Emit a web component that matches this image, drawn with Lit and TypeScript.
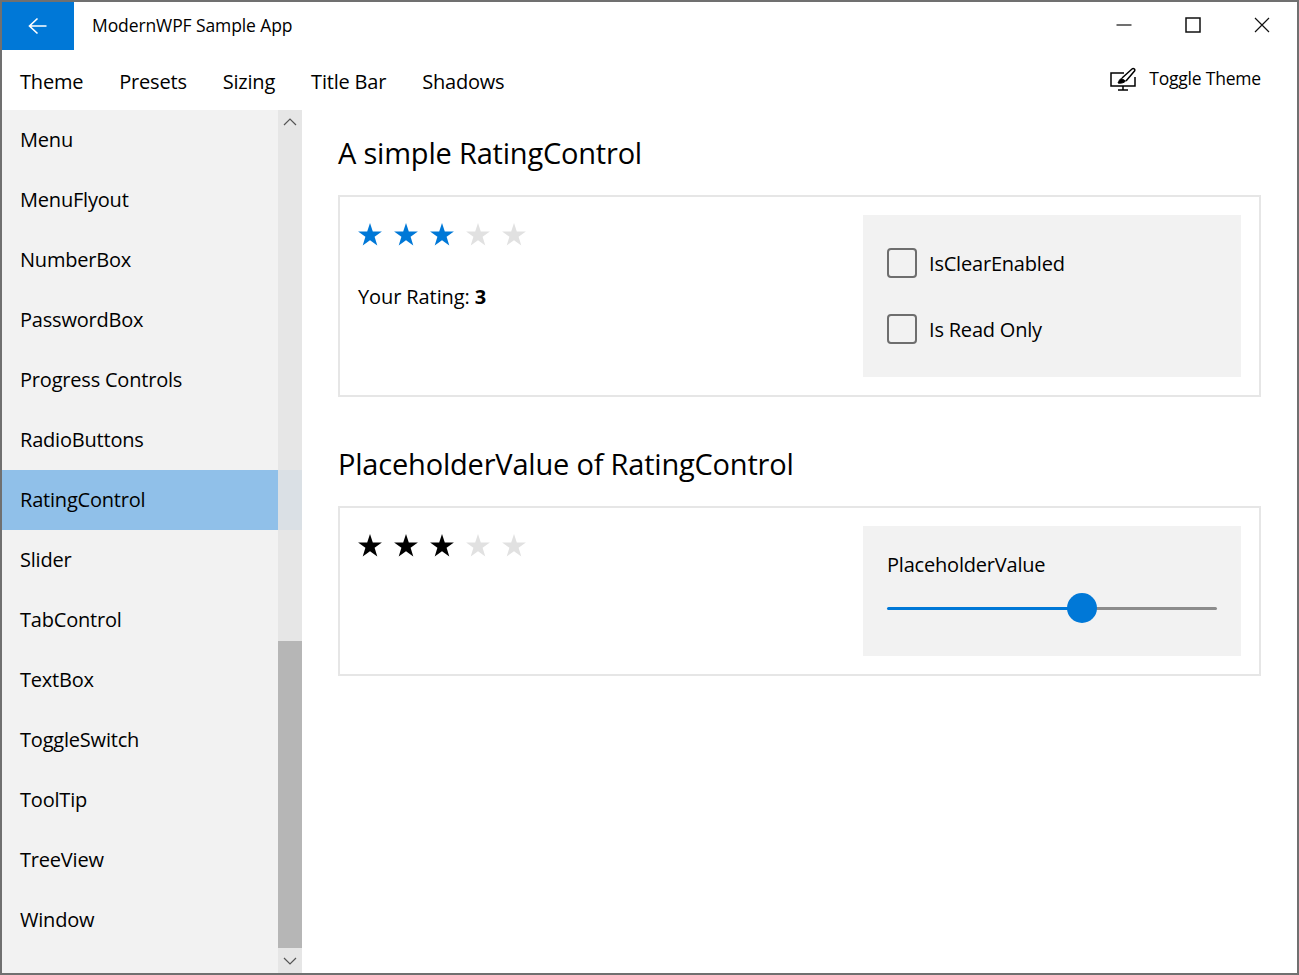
import {LitElement, css, html} from 'lit'
import {customElement} from 'lit/decorators.js'

const NAV_ITEMS = [
  'Menu', 'MenuFlyout', 'NumberBox', 'PasswordBox', 'Progress Controls', 'RadioButtons',
  'RatingControl', 'Slider', 'TabControl', 'TextBox', 'ToggleSwitch', 'ToolTip', 'TreeView', 'Window',
]
const MENU_ITEMS = ['Theme', 'Presets', 'Sizing', 'Title Bar', 'Shadows']

const star = (on: boolean, color: string) => html`
  <svg class="star" width="24" height="24" viewBox="0 0 24 24">
    <polygon
      points="12,1 14.8,9.4 23.9,9.4 16.6,14.8 19.3,23.5 12,18.2 4.7,23.5 7.4,14.8 0.1,9.4 9.2,9.4"
      fill=${on ? color : '#e1e1e1'}
    ></polygon>
  </svg>
`

const rating = (color: string) => html`
  <div class="rating">${[0, 1, 2, 3, 4].map((i) => star(i < 3, color))}</div>
`

@customElement('app-root')
export class AppRoot extends LitElement {
  static styles = css`
    :host {
      display: block;
      height: 975px;
      font-family: "Open Sans", "Noto Sans", sans-serif;
      color: #000;
    }

    .window {
      box-sizing: border-box;
      height: 975px;
      border: 2px solid #707070;
      display: flex;
      flex-direction: column;
      background: #fff;
      overflow: hidden;
    }

    .titlebar {
      height: 48px;
      display: flex;
      align-items: center;
      flex: none;
    }

    .back {
      width: 72px;
      height: 48px;
      background: #0078d7;
      display: flex;
      align-items: center;
      justify-content: center;
    }

    .app-title {
      margin-left: 18px;
      padding-bottom: 2px;
      font-size: 17.5px;
      letter-spacing: -0.1px;
      flex: 1;
    }

    .captions {
      display: flex;
      margin-right: 1px;
      padding-bottom: 2px;
    }

    .caption {
      width: 69px;
      height: 46px;
      display: flex;
      align-items: center;
      justify-content: center;
    }

    .caption.min {
      padding-left: 1px;
      box-sizing: border-box;
    }

    .menubar {
      height: 60px;
      flex: none;
      display: flex;
      align-items: center;
      padding-left: 18px;
      padding-top: 2px;
      box-sizing: border-box;
      gap: 36px;
      font-size: 20px;
      letter-spacing: -0.2px;
    }

    .toggle {
      margin-left: auto;
      margin-right: 36px;
      display: flex;
      align-items: center;
      gap: 13px;
      font-size: 17.5px;
      letter-spacing: -0.2px;
      position: relative;
      top: -3px;
    }

    .toggle svg {
      margin-left: 1px;
      margin-top: 1px;
    }

    .main {
      flex: 1;
      display: flex;
      min-height: 0;
    }

    .sidebar {
      width: 300px;
      flex: none;
      display: flex;
      background: #f2f2f2;
      position: relative;
    }

    .nav {
      flex: 1;
    }

    .nav-item {
      box-sizing: border-box;
      height: 60px;
      display: flex;
      align-items: center;
      padding-left: 18px;
      padding-bottom: 2px;
      font-size: 20px;
      letter-spacing: -0.2px;
    }

    .nav-item.selected {
      background: #90c0e9;
      width: 276px;
    }

    .selected-rest {
      position: absolute;
      left: 276px;
      top: 360px;
      width: 24px;
      height: 60px;
      background: rgba(0, 120, 215, 0.05);
    }

    .scrollbar {
      width: 24px;
      flex: none;
      background: #e6e6e6;
      display: flex;
      flex-direction: column;
    }

    .arrow {
      height: 25px;
      display: flex;
      align-items: center;
      justify-content: center;
      flex: none;
    }

    .arrow.up {
      height: 23px;
      margin-bottom: 2px;
    }

    .track {
      flex: 1;
      display: flex;
      flex-direction: column;
      justify-content: flex-end;
    }

    .thumb {
      height: 307px;
      background: #b6b6b6;
    }

    .content {
      flex: 1;
      padding: 20px 36px 0;
    }

    h2 {
      margin: 0;
      font-weight: 400;
      font-size: 29px;
      letter-spacing: -0.2px;
      line-height: 46px;
      height: 46px;
    }

    .card {
      box-sizing: border-box;
      margin-top: 19px;
      margin-bottom: 44px;
      border: 2px solid #e6e6e6;
      padding: 18px;
      display: flex;
      justify-content: space-between;
    }

    .card.first {
      height: 202px;
    }

    .card.second {
      height: 170px;
    }

    .rating {
      display: flex;
      gap: 12px;
      margin-top: 7px;
    }

    .star {
      display: block;
    }

    .your-rating {
      margin-top: 37px;
      font-size: 20px;
      letter-spacing: -0.1px;
      line-height: 28px;
    }

    .your-rating b {
      font-weight: 700;
    }

    .panel {
      width: 378px;
      box-sizing: border-box;
      background: #f2f2f2;
      padding: 0 24px;
      font-size: 20px;
      letter-spacing: -0.2px;
    }

    .checks {
      display: flex;
      flex-direction: column;
      justify-content: center;
      gap: 36px;
    }

    .check {
      display: flex;
      align-items: center;
      gap: 12px;
      height: 30px;
    }

    .box {
      box-sizing: border-box;
      width: 30px;
      height: 30px;
      border: 2px solid #6e6e6e;
      border-radius: 4px;
    }

    .slider-label {
      margin-top: 23px;
      line-height: 32px;
    }

    .slider {
      margin-top: 12px;
      height: 30px;
      display: flex;
      align-items: center;
      position: relative;
    }

    .fill {
      width: 195px;
      height: 3px;
      background: #0078d7;
      border-radius: 2px 0 0 2px;
    }

    .rest {
      flex: 1;
      height: 3px;
      background: #8c8c8c;
      border-radius: 0 2px 2px 0;
    }

    .thumb-dot {
      position: absolute;
      left: 180px;
      top: 0;
      width: 30px;
      height: 30px;
      border-radius: 50%;
      background: #0078d7;
    }
  `

  render() {
    return html`
      <div class="window">
        <div class="titlebar">
          <div class="back">
            <svg width="20" height="18" viewBox="0 0 20 18" fill="none" stroke="#fff" stroke-width="1.6">
              <path d="M1.5 9H18.5M9.5 1.5L1.5 9L9.5 16.5"></path>
            </svg>
          </div>
          <div class="app-title">ModernWPF Sample App</div>
          <div class="captions">
            <div class="caption min">
              <svg width="16" height="16" viewBox="0 0 16 16" fill="none" stroke="#111" stroke-width="1.2">
                <path d="M0.5 8H15.5"></path>
              </svg>
            </div>
            <div class="caption">
              <svg width="16" height="16" viewBox="0 0 16 16" fill="none" stroke="#111" stroke-width="1.5">
                <rect x="1" y="1" width="14" height="14"></rect>
              </svg>
            </div>
            <div class="caption">
              <svg width="16" height="16" viewBox="0 0 16 16" fill="none" stroke="#111" stroke-width="1.2">
                <path d="M1 1L15 15M15 1L1 15"></path>
              </svg>
            </div>
          </div>
        </div>
        <div class="menubar">
          ${MENU_ITEMS.map((m) => html`<span>${m}</span>`)}
          <div class="toggle">
            <svg width="26" height="24" viewBox="0 0 26 24" fill="none" stroke="#000" stroke-width="1.5">
              <path d="M14 6H1V19H25V10"></path>
              <path d="M13 19V23M8 23H18"></path>
              <path d="M12 11L22 2C23.5 0.8 25.5 2.3 24.5 4L16 14"></path>
              <path d="M11.5 11.5C9.5 12 9 14 8 16C10.5 16.5 14 16 15.5 14Z" fill="#000" stroke-width="1"></path>
            </svg>
            <span>Toggle Theme</span>
          </div>
        </div>
        <div class="main">
          <div class="sidebar">
            <div class="nav">
              ${NAV_ITEMS.map((n) => html`
                <div class="nav-item ${n === 'RatingControl' ? 'selected' : ''}">${n}</div>
              `)}
            </div>
            <div class="scrollbar">
              <div class="arrow up">
                <svg width="14" height="8" viewBox="0 0 14 8" fill="none" stroke="#555" stroke-width="1.2">
                  <path d="M1 7L7 1L13 7"></path>
                </svg>
              </div>
              <div class="track"><div class="thumb"></div></div>
              <div class="arrow">
                <svg width="14" height="8" viewBox="0 0 14 8" fill="none" stroke="#555" stroke-width="1.2">
                  <path d="M1 1L7 7L13 1"></path>
                </svg>
              </div>
            </div>
            <div class="selected-rest"></div>
          </div>
          <div class="content">
            <h2>A simple RatingControl</h2>
            <div class="card first">
              <div>
                ${rating('#0078d7')}
                <div class="your-rating">Your Rating: <b>3</b></div>
              </div>
              <div class="panel checks">
                <div class="check"><div class="box"></div><span>IsClearEnabled</span></div>
                <div class="check"><div class="box"></div><span>Is Read Only</span></div>
              </div>
            </div>
            <h2>PlaceholderValue of RatingControl</h2>
            <div class="card second">
              <div>${rating('#000')}</div>
              <div class="panel">
                <div class="slider-label">PlaceholderValue</div>
                <div class="slider">
                  <div class="fill"></div>
                  <div class="rest"></div>
                  <div class="thumb-dot"></div>
                </div>
              </div>
            </div>
          </div>
        </div>
      </div>
    `
  }
}
